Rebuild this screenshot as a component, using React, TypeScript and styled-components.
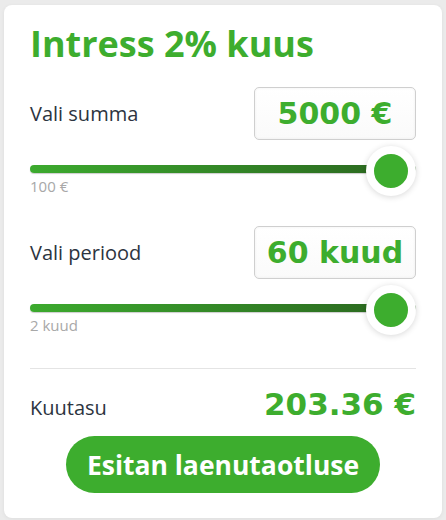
import styled, { createGlobalStyle } from "styled-components";

const green = "#3dad2e";
const numberFont = `"DejaVu Sans", "Open Sans", sans-serif`;

const GlobalStyle = createGlobalStyle`
  html, body {
    margin: 0;
    padding: 0;
    background: #ebebeb;
  }
  body {
    font-family: "Open Sans", "Noto Sans", sans-serif;
  }
`;

const fields = [
  { label: "Vali summa", value: "5000 €", min: "100 €", percent: 100 },
  { label: "Vali periood", value: "60 kuud", min: "2 kuud", percent: 100 },
];

export default function App() {
  return (
    <>
      <GlobalStyle />
      <Card>
        <Title>Intress 2% kuus</Title>

        {fields.map((field) => (
          <Field key={field.label}>
            <FieldHeader>
              <Label>{field.label}</Label>
              <ValueBox>{field.value}</ValueBox>
            </FieldHeader>

            <SliderWrap>
              <Track />
              <Thumb style={{ left: `calc((100% - 50px) * ${field.percent / 100})` }} />
            </SliderWrap>
            <MinLabel>{field.min}</MinLabel>
          </Field>
        ))}

        <Divider />

        <TotalRow>
          <Label>Kuutasu</Label>
          <TotalValue>203.36 €</TotalValue>
        </TotalRow>

        <ApplyButton>Esitan laenutaotluse</ApplyButton>
      </Card>
    </>
  );
}

const Card = styled.div`
  margin: 5px 4px 3px;
  padding: 18px 26px 25px;
  border-radius: 8px;
  background: #fff;
  box-shadow: 0 1px 4px rgba(0, 0, 0, 0.06);
  display: flex;
  flex-direction: column;
`;

const Title = styled.h1`
  margin: 0;
  font-size: 36px;
  line-height: 42px;
  font-weight: 700;
  color: ${green};
`;

const Field = styled.div`
  margin-top: 22px;

  & + & {
    margin-top: 31px;
  }
`;

const FieldHeader = styled.div`
  display: flex;
  justify-content: space-between;
  align-items: center;
`;

const Label = styled.span`
  font-size: 20px;
  line-height: 24px;
  color: #2c3440;
`;

const ValueBox = styled.div`
  width: 162px;
  height: 53px;
  box-sizing: border-box;
  display: flex;
  align-items: center;
  justify-content: center;
  border: 1px solid #cfcfcf;
  border-radius: 5px;
  background: linear-gradient(#fff, #fafafa);
  box-shadow: inset 0 0 3px rgba(0, 0, 0, 0.06);
  font-family: ${numberFont};
  font-size: 30px;
  font-weight: 700;
  color: ${green};
`;

const SliderWrap = styled.div`
  position: relative;
  margin-top: 25px;
`;

const Track = styled.div`
  height: 8px;
  border-radius: 4px;
  background: linear-gradient(90deg, #3caa2e, #2a641f);
  box-shadow: 0 1px 1px rgba(0, 0, 0, 0.2);
`;

const Thumb = styled.div`
  position: absolute;
  top: -19px;
  width: 50px;
  height: 50px;
  box-sizing: border-box;
  border-radius: 50%;
  background: ${green};
  border: 8px solid #fff;
  box-shadow: 0 1px 6px rgba(0, 0, 0, 0.16);
`;

const MinLabel = styled.div`
  margin-top: 4px;
  font-size: 15px;
  line-height: 18px;
  color: #a8a8a8;
`;

const Divider = styled.hr`
  margin: 34px 0 0;
  border: none;
  border-top: 1px solid #e4e4e4;
`;

const TotalRow = styled.div`
  margin-top: 17px;
  display: flex;
  justify-content: space-between;
  align-items: baseline;
`;

const TotalValue = styled.span`
  font-family: ${numberFont};
  font-size: 31px;
  line-height: 36px;
  font-weight: 700;
  color: ${green};
`;

const ApplyButton = styled.button`
  align-self: center;
  margin-top: 14px;
  width: 314px;
  height: 57px;
  border: none;
  border-radius: 29px;
  background: ${green};
  color: #fff;
  font-family: inherit;
  font-size: 26.5px;
  font-weight: 700;
  cursor: pointer;
`;
